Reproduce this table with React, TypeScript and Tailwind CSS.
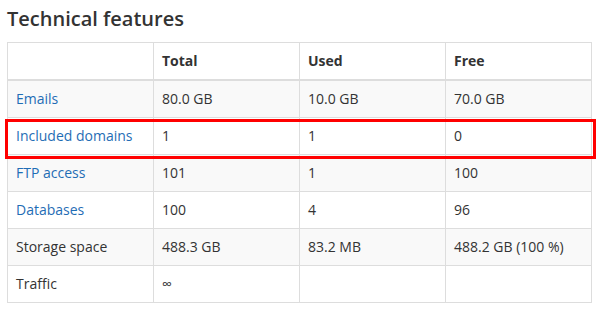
const rows = [
  { label: "Emails", link: true, total: "80.0 GB", used: "10.0 GB", free: "70.0 GB" },
  { label: "Included domains", link: true, total: "1", used: "1", free: "0" },
  { label: "FTP access", link: true, total: "101", used: "1", free: "100" },
  { label: "Databases", link: true, total: "100", used: "4", free: "96" },
  { label: "Storage space", link: false, total: "488.3 GB", used: "83.2 MB", free: "488.2 GB (100 %)" },
  { label: "Traffic", link: false, total: "∞", used: "", free: "" },
];

export default function App() {
  return (
    <div className="relative min-h-[314px] w-[598px] bg-white px-[7px] pt-[8px] text-[#333] font-['Open_Sans',sans-serif]">
      <h2 className="text-[20px] leading-[22px] font-semibold">Technical features</h2>

      <table className="mt-[12px] w-[585px] table-fixed border-collapse text-[14px] leading-5">
        <thead>
          <tr>
            <th className="w-1/4 border border-b-2 border-[#ddd] p-2 text-left font-bold" />
            <th className="w-1/4 border border-b-2 border-[#ddd] p-2 text-left font-bold">Total</th>
            <th className="w-1/4 border border-b-2 border-[#ddd] p-2 text-left font-bold">Used</th>
            <th className="w-1/4 border border-b-2 border-[#ddd] p-2 text-left font-bold">Free</th>
          </tr>
        </thead>
        <tbody>
          {rows.map((r, i) => (
            <tr key={r.label} className={i % 2 === 0 ? "bg-[#f9f9f9]" : "bg-white"}>
              <td className="border border-[#ddd] p-2">
                {r.link ? <a className="text-[#1f6db5]">{r.label}</a> : r.label}
              </td>
              <td className="border border-[#ddd] p-2">{r.total}</td>
              <td className="border border-[#ddd] p-2">{r.used}</td>
              <td className="border border-[#ddd] p-2">{r.free}</td>
            </tr>
          ))}
        </tbody>
      </table>

      {/* highlight around the domains row */}
      <div className="pointer-events-none absolute left-[5px] top-[119px] h-[40px] w-[591px] border-[3px] border-[#ff0000]" />
    </div>
  );
}
